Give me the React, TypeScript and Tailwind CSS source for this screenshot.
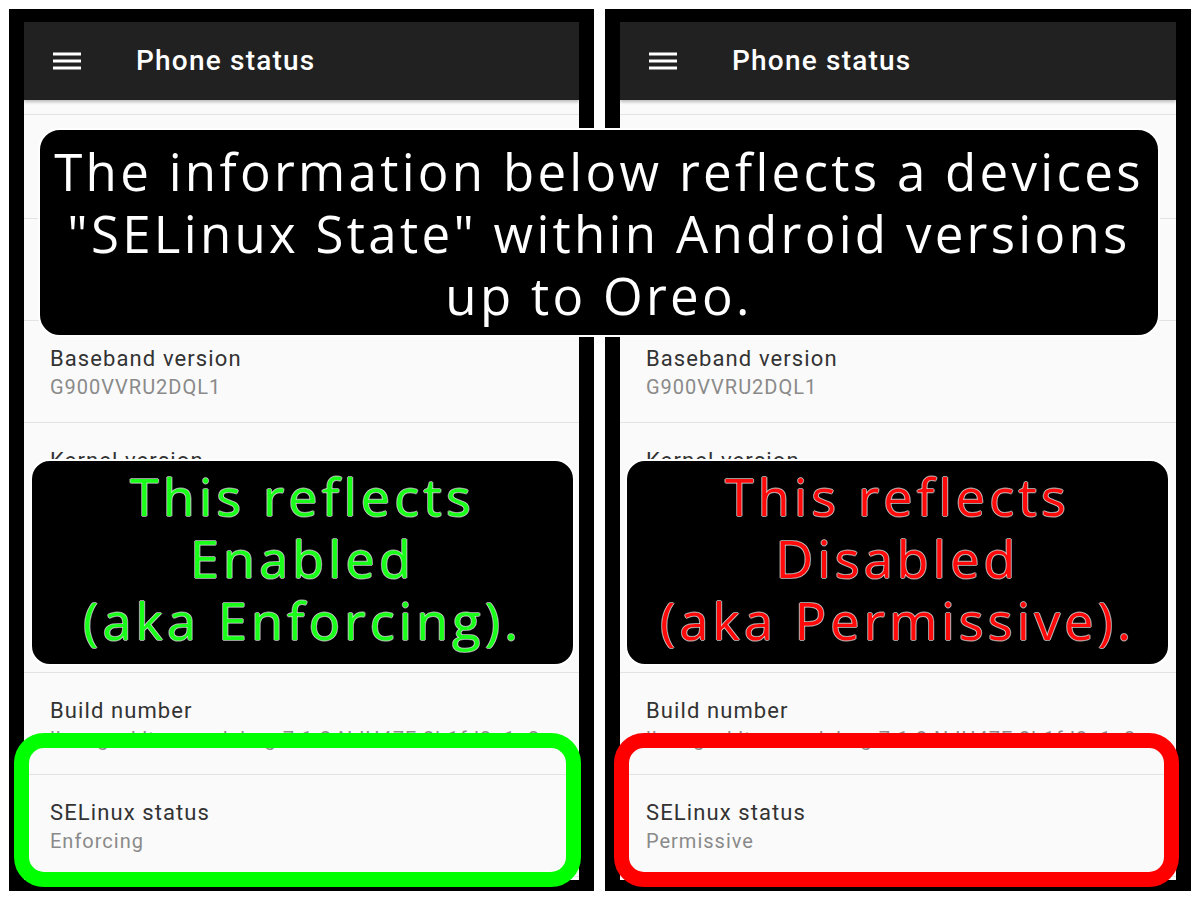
import React from "react";

type Row = { title: string; sub: string[]; h: string };

const rows: Row[] = [
  { title: "Model number", sub: ["SM-G900V"], h: "h-[104px]" },
  { title: "Android version", sub: ["7.1.2"], h: "h-[102px]" },
  { title: "Baseband version", sub: ["G900VVRU2DQL1"], h: "h-[102px]" },
  {
    title: "Kernel version",
    sub: ["3.4.113-lineageos-g2b1fd8a", "builder@lineage #1", "Tue Jan 2 06:12:44 UTC 2018"],
    h: "h-[250px]",
  },
  {
    title: "Build number",
    sub: ["lineage_klte-userdebug 7.1.2 NJH47F 2b1fd8a1a3"],
    h: "h-[102px]",
  },
];

function Hamburger() {
  return (
    <svg width="28" height="18" viewBox="0 0 28 18" className="shrink-0">
      <rect x="0" y="0.5" width="28" height="3" fill="#fff" />
      <rect x="0" y="7.5" width="28" height="3" fill="#fff" />
      <rect x="0" y="14.5" width="28" height="3" fill="#fff" />
    </svg>
  );
}

function Phone({ status, width }: { status: string; width: string }) {
  return (
    <div className={`${width} h-[882px] bg-black pt-[13px] px-[15px] pb-[11px] flex flex-col`}>
      <div className="flex-1 bg-[#fafafa] overflow-hidden flex flex-col font-['Roboto',sans-serif]">
        <div className="h-[78px] shrink-0 bg-[#212121] flex items-center pl-[29px] shadow-[0_2px_3px_rgba(0,0,0,0.25)] relative z-10">
          <Hamburger />
          <span className="ml-[55px] text-white text-[28px] font-medium tracking-[1.2px] leading-none">Phone status</span>
        </div>
        <div className="h-[15px] shrink-0 border-b border-[#e3e3e3]" />
        {rows.map((r) => (
          <div key={r.title} className={`${r.h} shrink-0 border-b border-[#e3e3e3] px-[26px] pt-[26px]`}>
            <div className="text-[22px] leading-[24px] tracking-[1.1px] text-[#333333]">{r.title}</div>
            {r.sub.map((s) => (
              <div key={s} className="text-[20px] leading-[24px] tracking-[1px] mt-[4px] text-[#8a8a8a] whitespace-nowrap">
                {s}
              </div>
            ))}
          </div>
        ))}
        <div className="h-[102px] shrink-0 border-b border-[#e3e3e3] px-[26px] pt-[26px]">
          <div className="text-[22px] leading-[24px] tracking-[1.1px] text-[#333333]">SELinux status</div>
          <div className="text-[20px] leading-[24px] tracking-[1px] mt-[4px] text-[#8a8a8a]">{status}</div>
        </div>
      </div>
    </div>
  );
}

export default function App() {
  return (
    <div className="relative w-[1200px] h-[900px] bg-white overflow-hidden">
      <div className="flex gap-[11px] pt-[9px] pl-[9px]">
        <Phone status="Enforcing" width="w-[585px]" />
        <Phone status="Permissive" width="w-[586px]" />
      </div>

      {/* top banner */}
      <div className="absolute left-[38px] top-[128px] w-[1122px] h-[209px] bg-black rounded-[22px] border-2 border-white flex flex-col items-center justify-center font-['Open_Sans',sans-serif] text-white text-[51px] leading-[62px] tracking-[3.3px] text-center">
        <div>The information below reflects a devices</div>
        <div>"SELinux State" within Android versions</div>
        <div>up to Oreo.</div>
      </div>

      {/* green label */}
      <div className="absolute left-[30px] top-[459px] w-[545px] h-[207px] bg-black rounded-[20px] border-2 border-white flex flex-col items-center justify-center pb-[10px] font-['Open_Sans',sans-serif] text-[#1aff1a] text-[52px] leading-[62px] tracking-[4.2px] text-center [text-shadow:1px_0_rgba(255,255,255,0.6),-1px_0_rgba(255,255,255,0.6),0_1px_rgba(255,255,255,0.6),0_-1px_rgba(255,255,255,0.6)]">
        <div>This reflects</div>
        <div>Enabled</div>
        <div>(aka Enforcing).</div>
      </div>

      {/* red label */}
      <div className="absolute left-[625px] top-[459px] w-[545px] h-[207px] bg-black rounded-[20px] border-2 border-white flex flex-col items-center justify-center pb-[10px] font-['Open_Sans',sans-serif] text-[#ff0a0a] text-[52px] leading-[62px] tracking-[4.2px] text-center [text-shadow:1px_0_rgba(255,255,255,0.6),-1px_0_rgba(255,255,255,0.6),0_1px_rgba(255,255,255,0.6),0_-1px_rgba(255,255,255,0.6)]">
        <div>This reflects</div>
        <div>Disabled</div>
        <div>(aka Permissive).</div>
      </div>

      {/* highlight outlines */}
      <div className="absolute left-[14px] top-[733px] w-[567px] h-[154px] rounded-[30px] border-[15px] border-[#00ff00]" />
      <div className="absolute left-[614px] top-[733px] w-[565px] h-[154px] rounded-[30px] border-[15px] border-[#ff0000]" />
    </div>
  );
}
